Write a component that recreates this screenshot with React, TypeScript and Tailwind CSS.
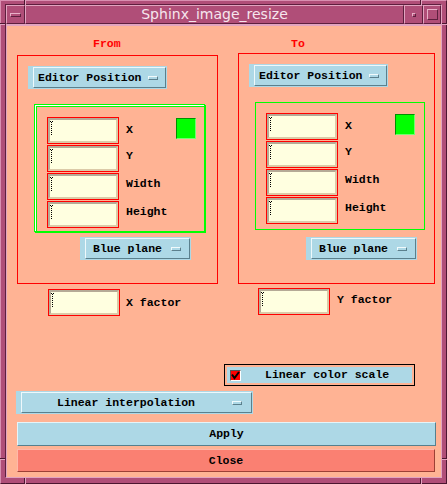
import React from "react";

const F = "font-['Liberation_Mono',monospace] font-bold text-[11.5px] leading-[14px] whitespace-pre";

function Cursor() {
  return (
    <svg width="3" height="15" viewBox="0 0 3 15" className="block" shapeRendering="crispEdges">
      <rect x="0" y="0" width="1" height="1" fill="#000" />
      <rect x="2" y="0" width="1" height="1" fill="#000" />
      {[1, 3, 5, 7, 9, 11, 13].map((y) => (
        <rect key={y} x="1" y={y} width="1" height="1" fill="#000" />
      ))}
    </svg>
  );
}

function Field() {
  return (
    <div className="w-[72px] h-[27px] shrink-0 border border-[#ff0000]">
      <div className="h-full bg-[#ffffe0] border-2 border-t-[#b5aa96] border-l-[#b5aa96] border-b-[#dccaa8] border-r-[#dccaa8] pt-px">
        <Cursor />
      </div>
    </div>
  );
}

function Indicator() {
  return (
    <div className="w-[10px] h-[4px] bg-[#add8e6] border border-t-[#f0fafc] border-l-[#f0fafc] border-b-[#5b808d] border-r-[#5b808d]" />
  );
}

function Option({ label, outer, inner, gap }: { label: string; outer: string; inner: string; gap: string }) {
  return (
    <div className={`flex h-[23px] shrink-0 bg-[#add8e6] p-px pl-[5px] ${outer}`}>
      <div
        className={`flex flex-1 items-center border border-t-[#eef8fb] border-l-[#eef8fb] border-b-[#5b808d] border-r-[#5b808d] ${inner}`}
      >
        <span className={`${F} text-black`}>{label}</span>
        <div className={gap}>
          <Indicator />
        </div>
      </div>
    </div>
  );
}

function GreenSquare() {
  return (
    <div className="w-[20px] h-[21px] shrink-0 self-start mt-px bg-[#00ff00] border border-t-[#009000] border-l-[#009000] border-b-[#70ff70] border-r-[#70ff70]" />
  );
}

function Rows({ xShift, shift }: { xShift: string; shift: string }) {
  const labels = ["X", "Y", "Width", "Height"];
  return (
    <div className="flex flex-col gap-px">
      {labels.map((l, i) => (
        <div key={l} className="flex h-[27px] items-center">
          <Field />
          <span className={`${F} text-black ml-[7px] w-[50px] ${i === 0 ? xShift : shift}`}>{l}</span>
          {i === 0 && <GreenSquare />}
        </div>
      ))}
    </div>
  );
}

function Tick({ cls }: { cls: string }) {
  return <div className={`absolute ${cls}`} />;
}

export default function App() {
  return (
    <div className="relative w-[447px] h-[484px] bg-[#b04e78] border border-t-[#d98fb1] border-l-[#d98fb1] border-b-[#4c1630] border-r-[#4c1630] pt-[3px] pl-[4px] pr-[4px] pb-[5px]">
      <div className="flex flex-col h-full border border-t-[#5e1f3e] border-l-[#5e1f3e] border-b-[#e2a4c0] border-r-[#e2a4c0]">
        {/* title bar */}
        <div className="flex h-[19px] shrink-0">
          <div className="w-[19px] flex items-center justify-center border border-t-[#e2a4c0] border-l-[#e2a4c0] border-b-[#5e1f3e] border-r-[#5e1f3e]">
            <div className="w-[11px] h-[4px] border border-t-[#e8b0c8] border-l-[#e8b0c8] border-b-[#5e1f3e] border-r-[#5e1f3e]" />
          </div>
          <div className="w-[379px] flex items-center justify-center border border-t-[#e2a4c0] border-l-[#e2a4c0] border-b-[#5e1f3e] border-r-[#5e1f3e]">
            <span className="font-['DejaVu_Sans',sans-serif] text-[14px] leading-[17px] text-[#f6e6ee]">Sphinx_image_resize</span>
          </div>
          <div className="w-[19px] flex items-center justify-center border border-t-[#e2a4c0] border-l-[#e2a4c0] border-b-[#5e1f3e] border-r-[#5e1f3e]">
            <div className="w-[4px] h-[4px] border border-t-[#e8b0c8] border-l-[#e8b0c8] border-b-[#5e1f3e] border-r-[#5e1f3e]" />
          </div>
          <div className="w-[18px] flex items-center justify-center border border-t-[#e2a4c0] border-l-[#e2a4c0] border-b-[#5e1f3e] border-r-[#5e1f3e]">
            <div className="w-[11px] h-[11px] border border-t-[#e8b0c8] border-l-[#e8b0c8] border-b-[#5e1f3e] border-r-[#5e1f3e]" />
          </div>
        </div>

        {/* content */}
        <div className="flex-1 flex flex-col bg-[#ffb394] border-t-2 border-l border-t-[#e2a4c0] border-l-[#e2a4c0]">
          <div className="flex pt-[11px]">
            {/* left column */}
            <div className="ml-[10px] w-[201px] flex flex-col">
              <div className={`${F} h-[14px] pl-[76px] text-[#ff0000]`}>From</div>
              <div className="mt-[4px] w-[201px] h-[229px] border border-[#ff0000] flex flex-col items-start">
                <Option
                  label="Editor Position"
                  outer="ml-[10px] mt-[10px] w-[139px]"
                  inner="pl-[4px]"
                  gap="ml-[6px]"
                />
                <div className="ml-[16px] mt-[15px] w-[171px] h-[128px] border border-[#00ff00] shadow-[1px_1px_0_#00ff00]">
                  <div className="h-full border-l border-t border-l-white border-t-white">
                    <div className="h-full border-l border-t border-l-[#00ff00] border-t-[#00ff00] pl-[10px] pt-[10px]">
                      <Rows xShift="mb-px" shift="mb-[5px]" />
                    </div>
                  </div>
                </div>
                <Option label="Blue plane" outer="ml-[62px] mt-[5px] w-[111px]" inner="pl-[7px]" gap="ml-[9px]" />
              </div>
              <div className="mt-[5px] pl-[31px] flex items-center">
                <Field />
                <span className={`${F} text-black ml-[6px]`}>X factor</span>
              </div>
            </div>

            {/* right column */}
            <div className="ml-[20px] w-[197px] flex flex-col">
              <div className={`${F} h-[14px] pl-[53px] text-[#ff0000]`}>To</div>
              <div className="mt-[2px] w-[197px] h-[231px] border border-[#ff0000] flex flex-col items-start">
                <Option
                  label="Editor Position"
                  outer="ml-[10px] mt-[10px] w-[139px]"
                  inner="pl-[4px]"
                  gap="ml-[6px]"
                />
                <div className="ml-[16px] mt-[15px] w-[170px] h-[128px] border border-[#00ff00] pl-[10px] pt-[10px]">
                  <Rows xShift="mb-[2px]" shift="mb-[6px]" />
                </div>
                <Option label="Blue plane" outer="ml-[67px] mt-[7px] w-[111px]" inner="pl-[7px]" gap="ml-[9px]" />
              </div>
              <div className="mt-[4px] pl-[20px] flex items-center">
                <Field />
                <span className={`${F} text-black ml-[7px] mb-[3px]`}>Y factor</span>
              </div>
            </div>
          </div>

          {/* Linear color scale */}
          <div className="ml-[217px] mt-[48px] w-[191px] h-[22px] border border-black p-[2px]">
            <div className="h-full bg-[#add8e6] flex items-center pl-[3px]">
              <div className="w-[11px] h-[11px] shrink-0 border border-t-[#555555] border-l-[#555555] border-b-white border-r-white bg-[#ff0000] flex items-center justify-center">
                <svg width="9" height="9" viewBox="0 0 9 9" className="block">
                  <path d="M1 3.5 L3.5 7 L8 1" stroke="#000" strokeWidth="2" fill="none" />
                </svg>
              </div>
              <span className={`${F} text-black ml-[24px]`}>Linear color scale</span>
            </div>
          </div>

          {/* Linear interpolation */}
          <Option
            label="Linear interpolation"
            outer="ml-[9px] mt-[5px] w-[237px]"
            inner="pl-[35px]"
            gap="ml-[37px]"
          />

          {/* Apply */}
          <div className="ml-[10px] mt-[8px] w-[419px] h-[24px] shrink-0 bg-[#add8e6] border border-t-[#e6f4f8] border-l-[#e6f4f8] border-b-[#56808e] border-r-[#56808e] flex items-center justify-center">
            <span className={`${F} text-black`}>Apply</span>
          </div>

          {/* Close */}
          <div className="ml-[10px] mt-[3px] w-[418px] h-[23px] shrink-0 bg-[#fa8072] border border-t-[#ffb8aa] border-l-[#ffb8aa] border-b-[#9c4036] border-r-[#9c4036] flex items-center justify-center">
            <span className={`${F} text-black`}>Close</span>
          </div>
        </div>
      </div>

      {/* frame resize ticks */}
      <Tick cls="left-[23px] top-[-1px] w-px h-[5px] bg-[#4c1630]" />
      <Tick cls="left-[24px] top-[-1px] w-px h-[5px] bg-[#e2a4c0]" />
      <Tick cls="left-[419px] top-[-1px] w-px h-[5px] bg-[#4c1630]" />
      <Tick cls="left-[420px] top-[-1px] w-px h-[5px] bg-[#e2a4c0]" />
      <Tick cls="left-[23px] bottom-[-1px] w-px h-[6px] bg-[#4c1630]" />
      <Tick cls="left-[24px] bottom-[-1px] w-px h-[6px] bg-[#e2a4c0]" />
      <Tick cls="left-[419px] bottom-[-1px] w-px h-[6px] bg-[#4c1630]" />
      <Tick cls="left-[420px] bottom-[-1px] w-px h-[6px] bg-[#e2a4c0]" />
      <Tick cls="left-[-1px] top-[22px] w-[5px] h-px bg-[#4c1630]" />
      <Tick cls="left-[-1px] top-[23px] w-[5px] h-px bg-[#e2a4c0]" />
      <Tick cls="right-[-1px] top-[22px] w-[5px] h-px bg-[#4c1630]" />
      <Tick cls="right-[-1px] top-[23px] w-[5px] h-px bg-[#e2a4c0]" />
      <Tick cls="left-[-1px] top-[457px] w-[5px] h-px bg-[#4c1630]" />
      <Tick cls="left-[-1px] top-[458px] w-[5px] h-px bg-[#e2a4c0]" />
      <Tick cls="right-[-1px] top-[457px] w-[5px] h-px bg-[#4c1630]" />
      <Tick cls="right-[-1px] top-[458px] w-[5px] h-px bg-[#e2a4c0]" />
    </div>
  );
}
